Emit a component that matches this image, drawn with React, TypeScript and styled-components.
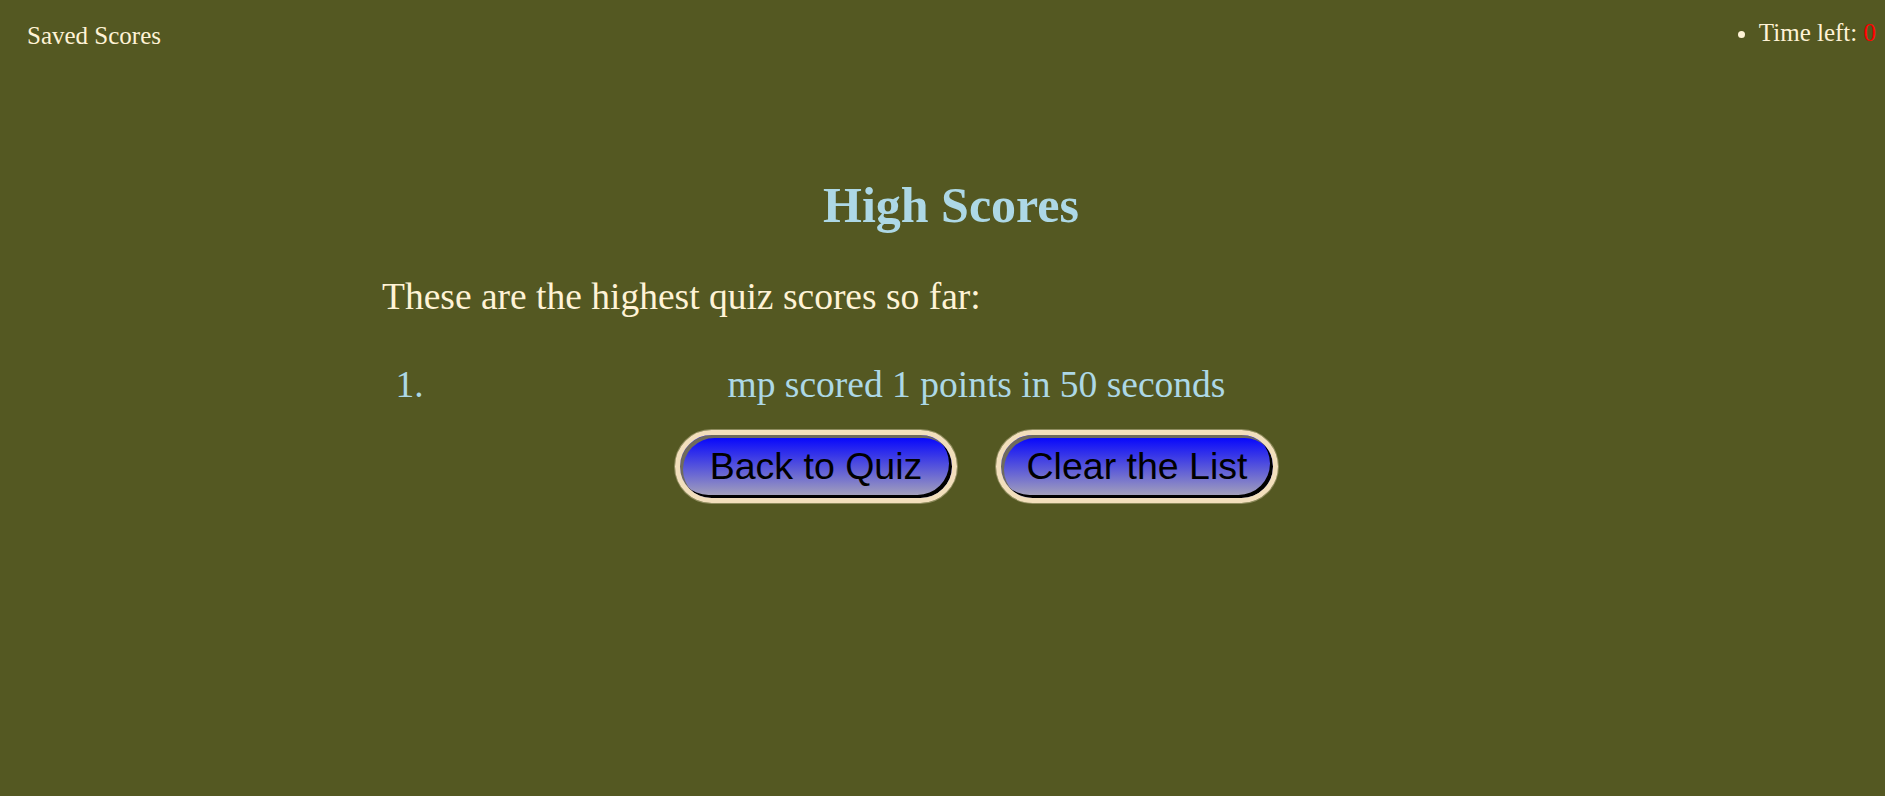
import React from "react";
import styled, { createGlobalStyle } from "styled-components";

const GlobalStyle = createGlobalStyle`
  html, body {
    margin: 0;
    padding: 0;
    background: #545822;
    min-height: 100%;
  }
  body {
    font-family: "Liberation Serif", "Times New Roman", serif;
    color: #fff3d6;
    min-height: 796px;
  }
`;

const Page = styled.div`
  min-height: 796px;
  background: #545822;
`;

const Header = styled.header`
  display: flex;
  justify-content: space-between;
  align-items: flex-start;
  padding: 19px 9px 0 27px;
  font-size: 25px;
  line-height: 28px;
`;

const Brand = styled.a`
  display: block;
  padding-top: 3px;
  color: #fff3d6;
  text-decoration: none;
`;

const StatusList = styled.ul`
  margin: 0;
  padding: 0;
  list-style: disc;
`;

const StatusItem = styled.li``;

const Zero = styled.span`
  color: #ff0000;
`;

const Main = styled.main`
  width: 1138px;
  margin-left: 382px;
  padding-top: 127px;
`;

const Title = styled.h1`
  margin: 0;
  text-align: center;
  font-size: 50px;
  line-height: 56px;
  font-weight: bold;
  color: #add8e6;
`;

const Intro = styled.p`
  margin: 42px 0 0;
  font-size: 37.5px;
  line-height: 44px;
`;

const ScoreList = styled.ol`
  margin: 44px 0 0;
  padding-left: 51px;
  font-size: 37.5px;
  line-height: 44px;
  color: #add8e6;
`;

const ScoreItem = styled.li`
  text-align: center;
`;

const ButtonRow = styled.div`
  display: flex;
  justify-content: center;
  gap: 39px;
  margin: 23px 0 0 51px;
`;

const PillButton = styled.button`
  width: 282px;
  font-family: "Liberation Sans", Arial, sans-serif;
  font-size: 37.5px;
  line-height: 43px;
  text-align: center;
  color: #000;
  padding: 10px 0;
  border: 5px solid #f2dfbc;
  border-radius: 40px;
  background: linear-gradient(to bottom, #0000ff 0%, #aaa7b8 100%);
  box-shadow: inset 3px 3px 0 #6f6b5c, inset -3px -3px 0 #000,
    0 0 0 1px rgba(255, 240, 210, 0.35);
  cursor: pointer;
`;

export default function App() {
  const scores = [{ name: "mp", points: 1, seconds: 50 }];
  return (
    <Page>
      <GlobalStyle />
      <Header>
        <Brand href="#">Saved Scores</Brand>
        <StatusList>
          <StatusItem>
            Time left: <Zero>0</Zero>
          </StatusItem>
        </StatusList>
      </Header>
      <Main>
        <Title>High Scores</Title>
        <Intro>These are the highest quiz scores so far:</Intro>
        <ScoreList>
          {scores.map((s, i) => (
            <ScoreItem key={i}>
              {s.name} scored {s.points} points in {s.seconds} seconds
            </ScoreItem>
          ))}
        </ScoreList>
        <ButtonRow>
          <PillButton>Back to Quiz</PillButton>
          <PillButton>Clear the List</PillButton>
        </ButtonRow>
      </Main>
    </Page>
  );
}
